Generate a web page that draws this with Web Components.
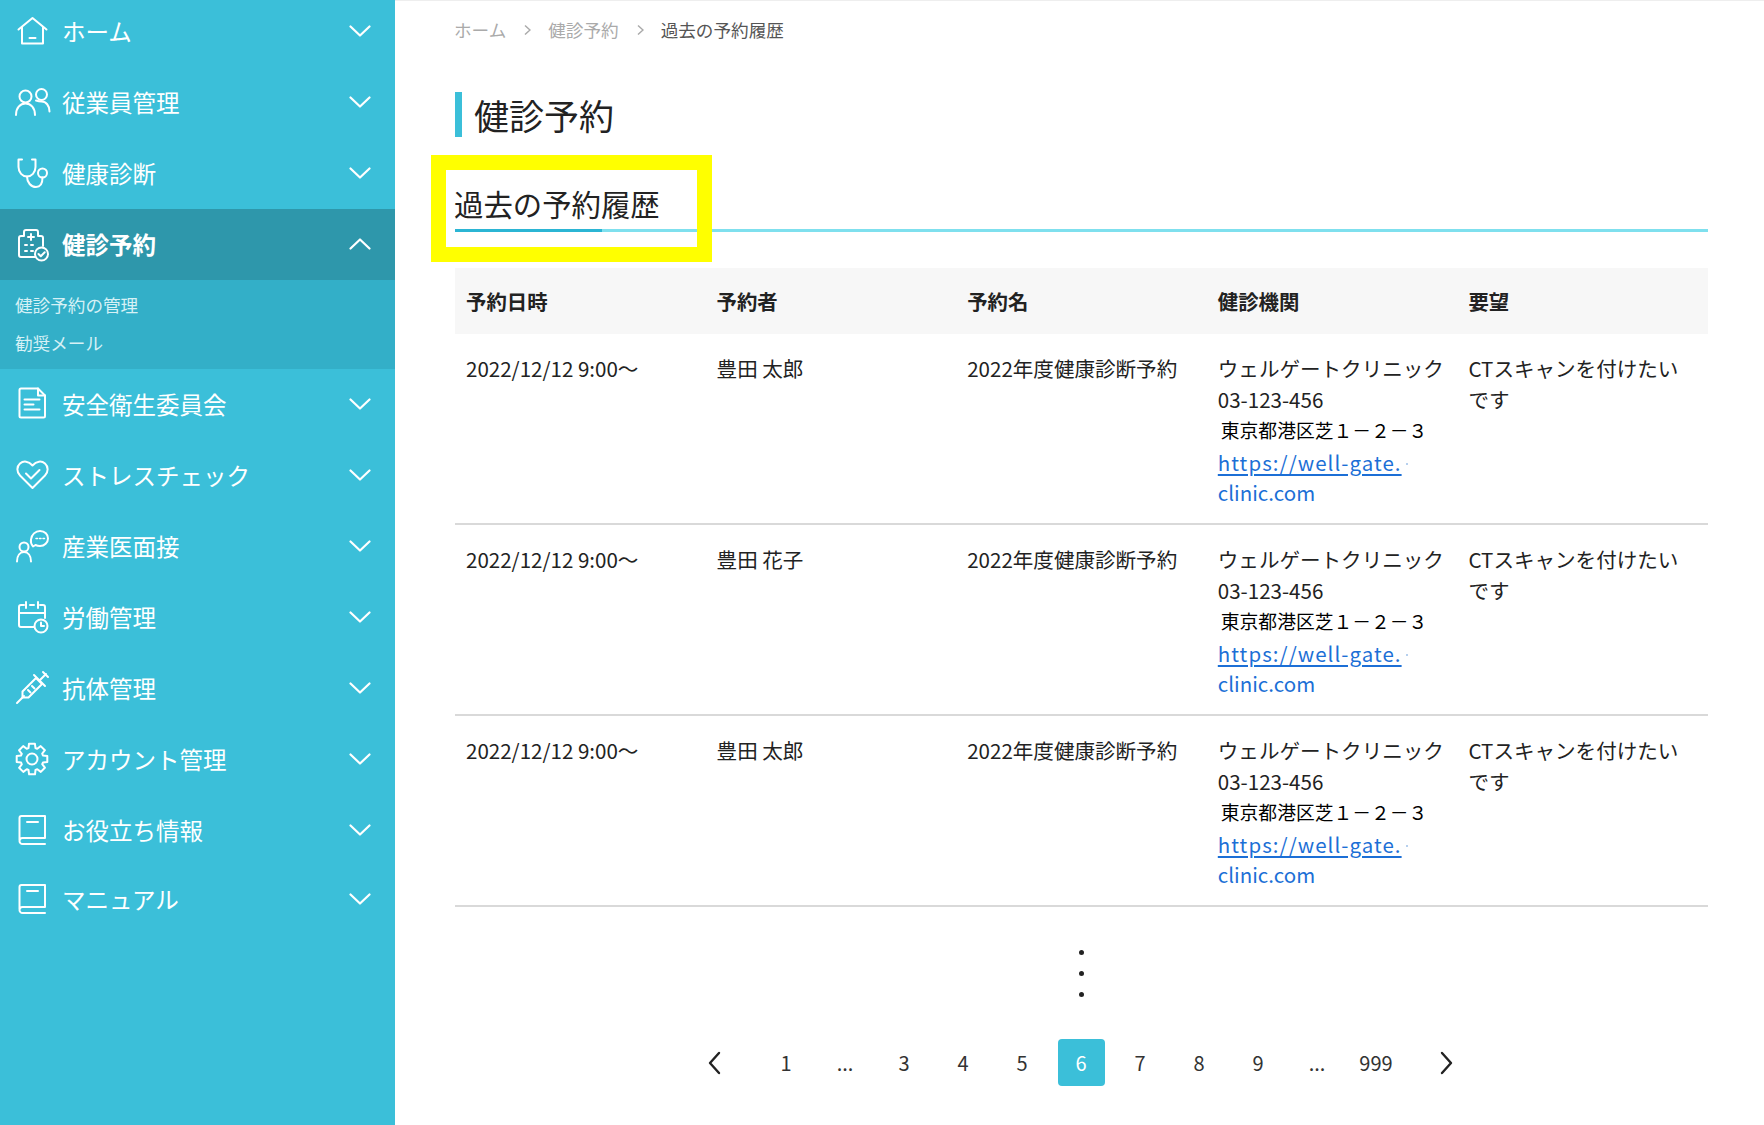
<!DOCTYPE html>
<html lang="ja">
<head>
<meta charset="utf-8">
<title>過去の予約履歴</title>
<style>
  html, body {
    background: #fff;
    color: #222;
    font-family: "Noto Sans CJK JP", "Noto Sans", sans-serif;
    height: 1125px;
    margin: 0;
    overflow: hidden;
  }
</style>
</head>
<body>
<app-shell>
  <side-bar slot="side">
    <nav-item icon="home" label="ホーム"></nav-item>
    <nav-item icon="people" label="従業員管理"></nav-item>
    <nav-item icon="stethoscope" label="健康診断"></nav-item>
    <nav-item icon="clinic" label="健診予約" active></nav-item>
    <sub-menu>
      <sub-link>健診予約の管理</sub-link>
      <sub-link>勧奨メール</sub-link>
    </sub-menu>
    <nav-item icon="doc" label="安全衛生委員会"></nav-item>
    <nav-item icon="heart" label="ストレスチェック"></nav-item>
    <nav-item icon="doctor" label="産業医面接"></nav-item>
    <nav-item icon="calendar" label="労働管理"></nav-item>
    <nav-item icon="syringe" label="抗体管理"></nav-item>
    <nav-item icon="gear" label="アカウント管理"></nav-item>
    <nav-item icon="book" label="お役立ち情報"></nav-item>
    <nav-item icon="book" label="マニュアル"></nav-item>
  </side-bar>

  <bread-crumb></bread-crumb>
  <page-title>健診予約</page-title>
  <section-heading>過去の予約履歴</section-heading>
  <reserve-table>
    <reserve-row date="2022/12/12 9:00〜" person="豊田 太郎" plan="2022年度健康診断予約"></reserve-row>
    <reserve-row date="2022/12/12 9:00〜" person="豊田 花子" plan="2022年度健康診断予約"></reserve-row>
    <reserve-row date="2022/12/12 9:00〜" person="豊田 太郎" plan="2022年度健康診断予約"></reserve-row>
  </reserve-table>
  <more-dots></more-dots>
  <page-nav></page-nav>
</app-shell>

<script>
const gearPath = () => {
  let d = ''
  for (let i = 0; i < 8; i++) {
    const a = i * Math.PI / 4 - Math.PI / 8
    const pts = [[a + 0.08, 11.5], [a + 0.2, 15.6], [a + 0.58, 15.6], [a + 0.7, 11.5]]
    for (const [t, r] of pts) {
      d += `${d ? 'L' : 'M'}${(17 + r * Math.cos(t)).toFixed(1)} ${(17 + r * Math.sin(t)).toFixed(1)}`
    }
  }
  return d + 'Z'
}

const ICONS = {
  home: '<path d="M3.5 15.5 17.5 4l14 11.5"/><path d="M7 13v16.5h21V13"/><path d="M14.5 24h6"/>',
  people: '<circle cx="10.5" cy="11.5" r="6"/><circle cx="26.5" cy="9.5" r="5.5"/><path d="M1 30c0-7 4-11.5 9.5-11.5S20 23 20 30"/><path d="M21 15.5c1.500.5 4 1 5.500 1 4.500 0 8 4 8 10"/>',
  stethoscope: '<path d="M7 3.500H3.500v7.500c0 5.500 4 9.500 8.500 9.500s8.500-4 8.500-9.500V3.500H17"/><path d="M12 20.500c0 6 4 10.500 9 10.500 4.500 0 6.500-4 6.500-9.500"/><circle cx="27.500" cy="17" r="4.500"/>',
  clinic: '<path d="M20 30H6a2 2 0 0 1-2-2V11a2 2 0 0 1 2-2h3V5a2 2 0 0 1 2-2h10a2 2 0 0 1 2 2v4h3a2 2 0 0 1 2 2v8"/><path d="M16 7v6M13 10h6M10 18h2M16 18h2M10 24h2M16 24h2"/><circle cx="26.500" cy="27" r="6.500"/><path d="m23.500 27 2.300 2.300 3.900-4"/>',
  doc: '<path d="M6 1.500h17l7 7V29a1.500 1.500 0 0 1-1.500 1.500H6A1.500 1.500 0 0 1 4.500 29V3A1.500 1.500 0 0 1 6 1.500Z"/><path d="M23 1.500v7h7"/><path d="M9.500 12.500h15M9.500 17.500h9M9.500 22.500h15"/>',
  heart: '<path d="M17.500 30 5 17.500C1.500 14 1.500 8.500 5 5.500c3.500-3 8.500-2.500 12.500 2 4-4.500 9-5 12.500-2 3.500 3 3.500 8.500 0 12Z"/><path d="m11 15.500 5 5 8.500-8.500"/>',
  doctor: '<circle cx="9" cy="18" r="4.500"/><path d="M2 32.500c0-6 3-9.500 7-9.500s7 3.500 7 9.500"/><path d="M18 17.500c-1.500-2-2.500-5-2-7C16.500 5.500 20.500 2 25 2c5 0 8 3.500 8 7.500S29.500 17 25 17c-2 0-3.500-.5-4.500-1Z"/><path d="M21 9.500h1.500M24.500 9.500H26M28 9.500h1.500" stroke-width="1.500"/>',
  calendar: '<path d="M19 27H6a2 2 0 0 1-2-2V7a2 2 0 0 1 2-2h3M15 5h4M25 5h3a2 2 0 0 1 2 2v11"/><path d="M11 2v6M23 2v6M4 13h26"/><circle cx="26" cy="26" r="6.500"/><path d="M26 22.500V26h3"/>',
  syringe: '<path d="m2 32 7-7"/><path d="M7.500 20.500 21 7l6 6-13.500 13.500H7.500Z"/><path d="m13 19 2.500 2.500M17 15l2.500 2.500"/><path d="m19 4 11 11M25 9l6-6M28 1l5 5"/>',
  gear: `<path d="${gearPath()}"/><circle cx="17" cy="17" r="5.500"/>`,
  book: '<path d="M4.500 27V5a2 2 0 0 1 2-2h23.500v22H7.500a3 3 0 0 0-3 3 3 3 0 0 0 3 3H30"/><path d="M12 9h11"/>'
}

const shellTemplate = document.createElement('template')
shellTemplate.innerHTML = `
  <style>
    :host {
      display: grid;
      grid-template-columns: 395px 1fr;
      height: 1125px;
    }

    .main {
      border-top: 1px solid #eee;
      box-sizing: border-box;
      display: flex;
      flex-direction: column;
      min-width: 0;
      padding: 0 56px 0 60px;
    }
  </style>
  <slot name="side"></slot>
  <div class="main"><slot></slot></div>
`

class AppShell extends HTMLElement {
  constructor () {
    super()
    this.attachShadow({ mode: 'open' })
    this.shadowRoot.appendChild(shellTemplate.content.cloneNode(true))
  }
}

const sideTemplate = document.createElement('template')
sideTemplate.innerHTML = `
  <style>
    :host {
      background: #3bbfd9;
      display: block;
      height: 1125px;
      overflow: hidden;
    }

    .list {
      display: flex;
      flex-direction: column;
      margin-top: -4px;
    }
  </style>
  <div class="list"><slot></slot></div>
`

class SideBar extends HTMLElement {
  constructor () {
    super()
    this.attachShadow({ mode: 'open' })
    this.shadowRoot.appendChild(sideTemplate.content.cloneNode(true))
  }
}

const navTemplate = document.createElement('template')
navTemplate.innerHTML = `
  <style>
    :host {
      align-items: center;
      box-sizing: border-box;
      color: #fff;
      display: flex;
      font-size: 23.5px;
      gap: 13px;
      height: 71px;
      padding: 0 24px 2px 15px;
    }

    :host([active]) {
      background: #2e97ab;
      font-weight: 700;
    }

    :host(:last-child) {
      margin-top: -2px;
    }

    .icon {
      fill: none;
      flex: none;
      height: 34px;
      overflow: visible;
      stroke: #fff;
      stroke-linecap: round;
      stroke-linejoin: round;
      stroke-width: 2;
      width: 34px;
    }

    .label {
      flex: 1;
    }

    .chev {
      fill: none;
      flex: none;
      height: 12px;
      stroke: #fff;
      stroke-linecap: round;
      stroke-linejoin: round;
      stroke-width: 2.200;
      width: 22px;
    }
  </style>
  <svg class="icon" viewBox="0 0 34 34"></svg>
  <span class="label"></span>
  <svg class="chev" viewBox="0 0 22 12"><path d="M1.500 1.500 11 10.500l9.500-9"/></svg>
`

class NavItem extends HTMLElement {
  constructor () {
    super()
    this.attachShadow({ mode: 'open' })
    this.shadowRoot.appendChild(navTemplate.content.cloneNode(true))
    this.shadowRoot.querySelector('.icon').innerHTML = ICONS[this.getAttribute('icon')]
    this.shadowRoot.querySelector('.label').textContent = this.getAttribute('label')
    if (this.hasAttribute('active')) {
      this.shadowRoot.querySelector('.chev path').setAttribute('d', 'M1.500 10.500 11 1.500l9.500 9')
    }
  }
}

const subMenuTemplate = document.createElement('template')
subMenuTemplate.innerHTML = `
  <style>
    :host {
      background: #33afc8;
      box-sizing: border-box;
      display: flex;
      flex-direction: column;
      height: 89px;
      padding: 6px 0 0 15px;
    }
  </style>
  <slot></slot>
`

class SubMenu extends HTMLElement {
  constructor () {
    super()
    this.attachShadow({ mode: 'open' })
    this.shadowRoot.appendChild(subMenuTemplate.content.cloneNode(true))
  }
}

const subLinkTemplate = document.createElement('template')
subLinkTemplate.innerHTML = `
  <style>
    :host {
      color: #d6f1f6;
      display: block;
      font-size: 17.600px;
      line-height: 38px;
    }
  </style>
  <slot></slot>
`

class SubLink extends HTMLElement {
  constructor () {
    super()
    this.attachShadow({ mode: 'open' })
    this.shadowRoot.appendChild(subLinkTemplate.content.cloneNode(true))
  }
}

const crumbTemplate = document.createElement('template')
crumbTemplate.innerHTML = `
  <style>
    :host {
      align-items: center;
      color: #aaa;
      display: flex;
      flex: none;
      font-size: 17.600px;
      height: 57px;
      margin-left: -1px;
    }

    svg {
      fill: none;
      height: 12px;
      margin: 0 17px 0 18px;
      stroke: #aaa;
      stroke-width: 1.500;
      width: 7px;
    }

    .now {
      color: #555;
    }
  </style>
  <span>ホーム</span>
  <svg viewBox="0 0 7 12"><path d="m1 1.500 5 4.500-5 4.500"/></svg>
  <span>健診予約</span>
  <svg viewBox="0 0 7 12"><path d="m1 1.500 5 4.500-5 4.500"/></svg>
  <span class="now">過去の予約履歴</span>
`

class BreadCrumb extends HTMLElement {
  constructor () {
    super()
    this.attachShadow({ mode: 'open' })
    this.shadowRoot.appendChild(crumbTemplate.content.cloneNode(true))
  }
}

const titleTemplate = document.createElement('template')
titleTemplate.innerHTML = `
  <style>
    :host {
      align-items: center;
      border-left: 7px solid #3bbfd9;
      color: #222;
      display: flex;
      flex: none;
      font-size: 35px;
      height: 45px;
      margin-top: 34px;
      padding-left: 12px;
    }
  </style>
  <slot></slot>
`

class PageTitle extends HTMLElement {
  constructor () {
    super()
    this.attachShadow({ mode: 'open' })
    this.shadowRoot.appendChild(titleTemplate.content.cloneNode(true))
  }
}

const headingTemplate = document.createElement('template')
headingTemplate.innerHTML = `
  <style>
    :host {
      border-bottom: 3px solid #7fe0ee;
      box-sizing: border-box;
      color: #222;
      display: block;
      flex: none;
      font-size: 29.400px;
      height: 95px;
      line-height: 44px;
      padding-top: 44px;
      position: relative;
      text-indent: -1px;
    }

    .accent {
      background: #2bb5d4;
      bottom: -3px;
      height: 3px;
      left: 0;
      position: absolute;
      width: 147px;
    }

    .marker {
      border: 15px solid #ff0;
      box-sizing: border-box;
      height: 107px;
      left: -24px;
      position: absolute;
      top: 18px;
      width: 281px;
    }
  </style>
  <slot></slot>
  <div class="accent"></div>
  <div class="marker"></div>
`

class SectionHeading extends HTMLElement {
  constructor () {
    super()
    this.attachShadow({ mode: 'open' })
    this.shadowRoot.appendChild(headingTemplate.content.cloneNode(true))
  }
}

const tableTemplate = document.createElement('template')
tableTemplate.innerHTML = `
  <style>
    :host {
      display: block;
      flex: none;
      margin-top: 36px;
    }

    .head {
      align-items: center;
      background: #f7f7f7;
      display: grid;
      font-size: 20.400px;
      font-weight: 700;
      grid-template-columns: repeat(5, 1fr);
      height: 66px;
    }

    .head span {
      padding-left: 11px;
    }
  </style>
  <div class="head">
    <span>予約日時</span>
    <span>予約者</span>
    <span>予約名</span>
    <span>健診機関</span>
    <span>要望</span>
  </div>
  <slot></slot>
`

class ReserveTable extends HTMLElement {
  constructor () {
    super()
    this.attachShadow({ mode: 'open' })
    this.shadowRoot.appendChild(tableTemplate.content.cloneNode(true))
  }
}

const rowTemplate = document.createElement('template')
rowTemplate.innerHTML = `
  <style>
    :host {
      border-bottom: 2px solid #d9d9d9;
      box-sizing: border-box;
      color: #222;
      display: grid;
      font-size: 20.550px;
      grid-template-columns: repeat(5, 1fr);
      height: 191px;
      line-height: 31px;
      padding-top: 19px;
    }

    .cell {
      padding-left: 11px;
    }

    .line {
      display: block;
      white-space: nowrap;
    }

    .addr {
      color: #000;
      font-size: 18.800px;
      line-height: 30px;
      margin-left: 3px;
    }

    .url {
      color: #1c6fd6;
      font-size: 20.500px;
      line-height: 35px;
    }

    .url u {
      letter-spacing: 1.050px;
      text-underline-offset: 3px;
    }

    .url i {
      background: #9fc0e8;
      border-radius: 50%;
      display: inline-block;
      height: 2px;
      margin-left: 4px;
      vertical-align: 6px;
      width: 2px;
    }

    .url + .url {
      line-height: 25px;
    }

    .wish {
      padding-right: 24px;
    }
  </style>
  <div class="cell date"></div>
  <div class="cell person"></div>
  <div class="cell plan"></div>
  <div class="cell">
    <span class="line">ウェルゲートクリニック</span>
    <span class="line">03-123-456</span>
    <span class="line addr">東京都港区芝１－２－３</span>
    <span class="line url"><u>https://well-gate.</u><i></i></span>
    <span class="line url">clinic.com</span>
  </div>
  <div class="cell wish">CTスキャンを付けたいです</div>
`

class ReserveRow extends HTMLElement {
  constructor () {
    super()
    this.attachShadow({ mode: 'open' })
    this.shadowRoot.appendChild(rowTemplate.content.cloneNode(true))
    this.shadowRoot.querySelector('.date').textContent = this.getAttribute('date')
    this.shadowRoot.querySelector('.person').textContent = this.getAttribute('person')
    this.shadowRoot.querySelector('.plan').textContent = this.getAttribute('plan')
  }
}

const dotsTemplate = document.createElement('template')
dotsTemplate.innerHTML = `
  <style>
    :host {
      align-items: center;
      display: flex;
      flex: none;
      flex-direction: column;
      gap: 16px;
      margin-top: 43px;
    }

    i {
      background: #222;
      border-radius: 50%;
      height: 5px;
      width: 5px;
    }
  </style>
  <i></i><i></i><i></i>
`

class MoreDots extends HTMLElement {
  constructor () {
    super()
    this.attachShadow({ mode: 'open' })
    this.shadowRoot.appendChild(dotsTemplate.content.cloneNode(true))
  }
}

const pagerTemplate = document.createElement('template')
pagerTemplate.innerHTML = `
  <style>
    :host {
      align-items: center;
      color: #333;
      display: flex;
      flex: none;
      font-size: 20px;
      gap: 12px;
      justify-content: center;
      margin-top: 42px;
    }

    span {
      align-items: center;
      border-radius: 4px;
      display: flex;
      height: 47px;
      justify-content: center;
      width: 47px;
    }

    .now {
      background: #3bbfd9;
      color: #fff;
    }

    svg {
      fill: none;
      height: 24px;
      stroke: #222;
      stroke-linecap: round;
      stroke-linejoin: round;
      stroke-width: 2.400;
      width: 14px;
    }

    .prev {
      margin-right: 13px;
      margin-left: -2px;
    }

    .next {
      margin-left: 12px;
    }
  </style>
  <span class="prev"><svg viewBox="0 0 14 24"><path d="M12 2 3 12l9 10"/></svg></span>
  <span>1</span><span>...</span><span>3</span><span>4</span><span>5</span>
  <span class="now">6</span>
  <span>7</span><span>8</span><span>9</span><span>...</span><span>999</span>
  <span class="next"><svg viewBox="0 0 14 24"><path d="m2 2 9 10-9 10"/></svg></span>
`

class PageNav extends HTMLElement {
  constructor () {
    super()
    this.attachShadow({ mode: 'open' })
    this.shadowRoot.appendChild(pagerTemplate.content.cloneNode(true))
  }
}

window.customElements.define('app-shell', AppShell)
window.customElements.define('side-bar', SideBar)
window.customElements.define('nav-item', NavItem)
window.customElements.define('sub-menu', SubMenu)
window.customElements.define('sub-link', SubLink)
window.customElements.define('bread-crumb', BreadCrumb)
window.customElements.define('page-title', PageTitle)
window.customElements.define('section-heading', SectionHeading)
window.customElements.define('reserve-table', ReserveTable)
window.customElements.define('reserve-row', ReserveRow)
window.customElements.define('more-dots', MoreDots)
window.customElements.define('page-nav', PageNav)
</script>
</body>
</html>
